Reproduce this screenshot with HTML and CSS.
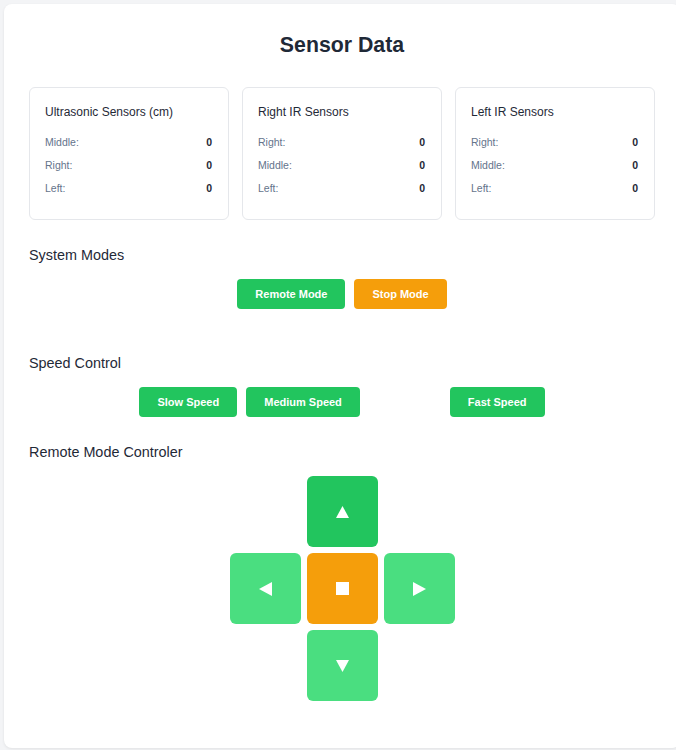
FILE: index.html
```html
<!DOCTYPE html>
<html>
<head>
<meta charset="utf-8">
<link rel="stylesheet" href="styles.css">
</head>
<body>
<div class="panel">
  <h1 class="title">Sensor Data</h1>
  <div class="sensor-grid">
    <div class="sensor-card">
      <div class="sensor-title">Ultrasonic Sensors (cm)</div>
      <div class="row"><span class="label">Middle:</span><span class="value">0</span></div>
      <div class="row"><span class="label">Right:</span><span class="value">0</span></div>
      <div class="row"><span class="label">Left:</span><span class="value">0</span></div>
    </div>
    <div class="sensor-card">
      <div class="sensor-title">Right IR Sensors</div>
      <div class="row"><span class="label">Right:</span><span class="value">0</span></div>
      <div class="row"><span class="label">Middle:</span><span class="value">0</span></div>
      <div class="row"><span class="label">Left:</span><span class="value">0</span></div>
    </div>
    <div class="sensor-card">
      <div class="sensor-title">Left IR Sensors</div>
      <div class="row"><span class="label">Right:</span><span class="value">0</span></div>
      <div class="row"><span class="label">Middle:</span><span class="value">0</span></div>
      <div class="row"><span class="label">Left:</span><span class="value">0</span></div>
    </div>
  </div>

  <h2 class="section-title first">System Modes</h2>
  <div class="btn-row modes">
    <button class="btn green">Remote Mode</button>
    <button class="btn orange">Stop Mode</button>
  </div>

  <h2 class="section-title">Speed Control</h2>
  <div class="btn-row">
    <button class="btn green">Slow Speed</button>
    <button class="btn green">Medium Speed</button>
    <span class="spacer"></span>
    <button class="btn green">Fast Speed</button>
  </div>

  <h2 class="section-title">Remote Mode Controler</h2>
  <div class="dpad">
    <button class="pad up dark"><svg width="13" height="12" viewBox="0 0 13 12"><polygon points="6.5,0 13,12 0,12" fill="#fff"/></svg></button>
    <button class="pad left"><svg width="13" height="14" viewBox="0 0 13 14"><polygon points="0,7 13,0 13,14" fill="#fff"/></svg></button>
    <button class="pad center stop"><svg width="13" height="13" viewBox="0 0 13 13"><rect width="13" height="13" fill="#fff"/></svg></button>
    <button class="pad right"><svg width="13" height="14" viewBox="0 0 13 14"><polygon points="13,7 0,0 0,14" fill="#fff"/></svg></button>
    <button class="pad down"><svg width="13" height="12" viewBox="0 0 13 12"><polygon points="0,0 13,0 6.5,12" fill="#fff"/></svg></button>
  </div>
</div>
</body>
</html>
```
FILE: styles.css
```css
html, body {
  margin: 0;
  overflow: hidden;
}
body {
  background: #f3f4f6;
  padding: 4px;
  font-family: "Liberation Sans", Arial, sans-serif;
  color: #1f2937;
}
.panel {
  box-sizing: border-box;
  width: 676px;
  height: 744px;
  background: #fff;
  border-radius: 8px;
  box-shadow: 0 1px 3px rgba(0,0,0,0.08);
  padding: 25px;
}
.title {
  margin: 2px 0 28px;
  font-size: 21.3px;
  line-height: 28px;
  font-weight: 700;
  text-align: center;
  color: #1f2937;
}
.sensor-grid {
  display: grid;
  grid-template-columns: repeat(3, 1fr);
  gap: 13px;
}
.sensor-card {
  border: 1px solid #e5e7eb;
  border-radius: 6px;
  padding: 16px 16px 15px 15px;
}
.sensor-title {
  font-size: 12px;
  line-height: 16px;
  margin-bottom: 15px;
  color: #1f2937;
}
.row {
  display: flex;
  justify-content: space-between;
  font-size: 10.5px;
  line-height: 15px;
  margin-bottom: 8px;
}
.label { color: #64748b; }
.value { font-weight: 700; color: #1f2937; }
.section-title {
  margin: 26.5px 0 15.5px;
  font-size: 14.4px;
  line-height: 17px;
  font-weight: 400;
  color: #1f2937;
}
.section-title.first { margin-top: 26.5px; }
.btn-row {
  display: flex;
  justify-content: center;
  gap: 9px;
}
.btn-row.modes { padding-bottom: 19px; }
.btn {
  height: 30px;
  padding: 0 18px;
  border: none;
  border-radius: 4px;
  font-family: "Liberation Sans", Arial, sans-serif;
  font-size: 11px;
  font-weight: 700;
  color: #fff;
}
.btn.green { background: #22c55e; }
.btn.orange { background: #f59e0b; }
.spacer { width: 72px; }
.dpad {
  display: grid;
  grid-template-columns: repeat(3, 71px);
  grid-template-rows: repeat(3, 71px);
  gap: 6px;
  justify-content: center;
  grid-template-areas:
    ". up ."
    "left center right"
    ". down .";
}
.pad {
  border: none;
  border-radius: 6px;
  background: #4ade80;
  display: flex;
  align-items: center;
  justify-content: center;
  padding: 0;
}
.pad svg { display: block; }
.pad.dark { background: #22c55e; }
.pad.stop { background: #f59e0b; }
.up { grid-area: up; }
.left { grid-area: left; }
.center { grid-area: center; }
.right { grid-area: right; }
.down { grid-area: down; }
```
